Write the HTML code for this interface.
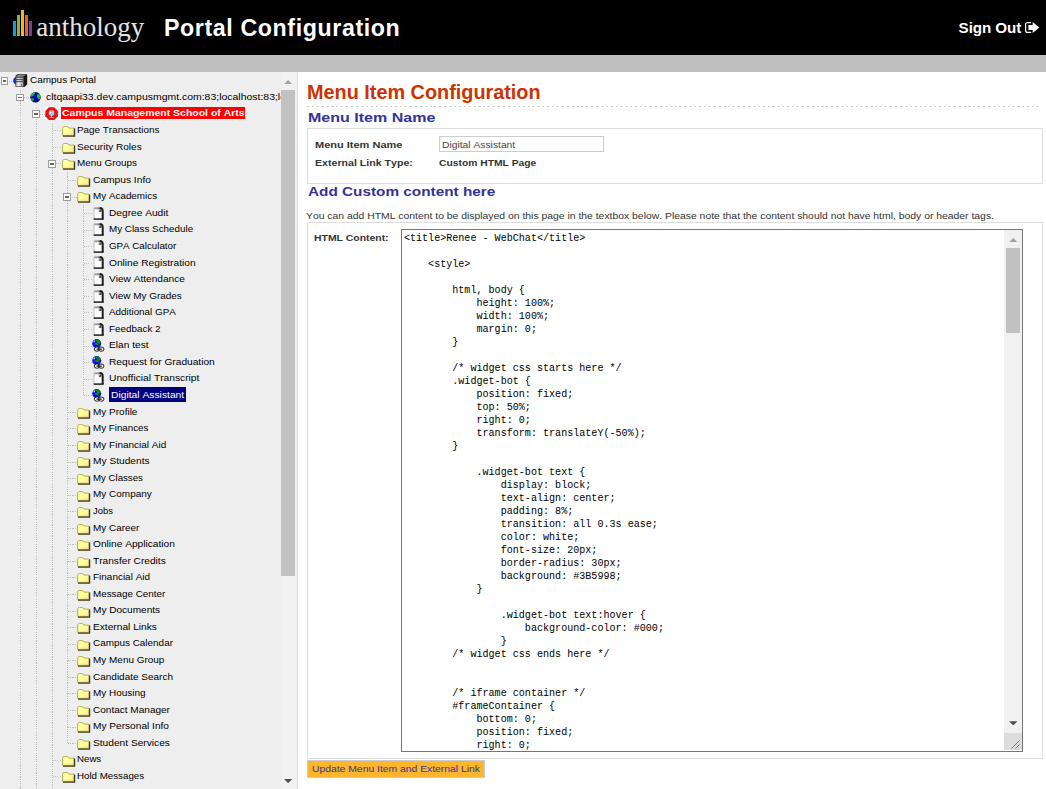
<!DOCTYPE html>
<html><head><meta charset="utf-8"><title>Portal Configuration</title>
<style>
html,body{margin:0;padding:0;background:#fff;overflow:hidden}
body{width:1046px;height:789px;position:relative;font-family:"Liberation Sans",sans-serif;font-kerning:none}
.t{position:absolute;white-space:pre;display:block;transform-origin:0 0;line-height:16px;height:16px;font-family:"Liberation Sans",sans-serif}
#hdr{position:absolute;left:0;top:0;width:1046px;height:55px;background:#000}
#bar{position:absolute;left:0;top:55px;width:1046px;height:17px;background:#c0c0c0}
#logo i{position:absolute;width:2.9px;display:block}
#so{position:absolute;left:1024.7px;top:22.1px}
#left{position:absolute;left:0;top:72px;width:280.8px;height:717px;background:#eee}
#trk{position:absolute;left:280.8px;top:72px;width:16.3px;height:717px;background:#f1f1f1}
#thb{position:absolute;left:281.2px;top:90px;width:13.7px;height:485.9px;background:#c1c1c1}
#sep{position:absolute;left:297.1px;top:72px;width:1px;height:717px;background:#ddd}
.arr{position:absolute}
#tree{position:absolute;left:0;top:0;width:280.8px;height:789px;overflow:hidden}
#tree i{position:absolute;display:block}
.vd{width:1px;background:repeating-linear-gradient(to bottom,#bcbcbc 0,#bcbcbc 1.1px,transparent 1.1px,transparent 2.2px)}
.hd{height:1px;background:repeating-linear-gradient(to right,#bcbcbc 0,#bcbcbc 1.1px,transparent 1.1px,transparent 2.2px)}
.ex{width:5.8px;height:5.5px;border:1px solid #9c9c9c;background:#fff;box-sizing:content-box}
.ex b{position:absolute;left:1px;top:2px;width:3.9px;height:1.4px;background:#666;display:block}
.ic{position:absolute;overflow:visible}
#dash{position:absolute;left:306.9px;top:106px;width:735px;height:1px;background:repeating-linear-gradient(to right,#cacaca 0,#cacaca 2px,transparent 2px,transparent 4.9px)}
.fs{position:absolute;border:1px solid #ddd}
#inp{position:absolute;left:439.2px;top:136.2px;width:162.6px;height:13.4px;border:1px solid #ccc;background:#fff}
#ta{position:absolute;left:401px;top:229px;width:619.7px;height:521.3px;border:1px solid #767676;background:#fff}
#code{position:absolute;margin:0;left:403.9px;top:231.6px;font-family:"Liberation Mono",monospace;font-size:10.08px;line-height:13px;color:#000;white-space:pre}
#tatrk{position:absolute;left:1004.2px;top:230px;width:17.5px;height:503px;background:#f1f1f1}
#tathb{position:absolute;left:1006.1px;top:248px;width:13.9px;height:84.8px;background:#c1c1c1}
#tacor{position:absolute;left:1004.2px;top:733px;width:17.5px;height:17.3px;background:#dcdcdc;overflow:hidden}
#tacor svg{position:absolute;left:-1px;top:-1px}
#btn{position:absolute;left:307.2px;top:760.4px;width:175.6px;height:15.2px;border:1px solid #ccc;background:#fdb52d}

</style></head>
<body>
<svg width="0" height="0" style="position:absolute"><defs><linearGradient id="fg" x1="0" y1="0" x2="1" y2="1"><stop offset="0" stop-color="#ffffa2"/><stop offset="0.5" stop-color="#ffff9a"/><stop offset="1" stop-color="#ffdca4"/></linearGradient><linearGradient id="pt" gradientUnits="userSpaceOnUse" x1="0" y1="0" x2="8" y2="0"><stop offset="0" stop-color="#b4b4b4"/><stop offset="0.7" stop-color="#8a8a8a"/><stop offset="1" stop-color="#333"/></linearGradient><radialGradient id="gg" cx="0.4" cy="0.35" r="0.7"><stop offset="0" stop-color="#0a0ae0"/><stop offset="1" stop-color="#000078"/></radialGradient><linearGradient id="sg" x1="0" y1="0" x2="1" y2="0"><stop offset="0" stop-color="#8c8c8c"/><stop offset="0.35" stop-color="#f2f2f2"/><stop offset="1" stop-color="#9a9a9a"/></linearGradient></defs></svg>
<div id="hdr"></div>
<div id="bar"></div>
<div id="logo"><i style="left:13.3px;width:2.5px;top:20.6px;height:15.4px;background:#1e9ad6"></i><i style="left:16.8px;top:15px;height:21px;background:#7db642"></i><i style="left:20.7px;width:3.1px;top:10px;height:26px;background:#f7b519"></i><i style="left:24.9px;width:3.1px;top:15px;height:21px;background:#ea5a2c"></i><i style="left:29.1px;width:2.8px;top:20.6px;height:15.4px;background:#7c3f98"></i></div>
<svg id="so" width="14.3" height="11" viewBox="0 0 14.3 11"><path d="M6.2 0.6H2.6Q0.6 0.6 0.6 2.6V8.4Q0.6 10.4 2.6 10.4H6.2" fill="none" stroke="#fff" stroke-width="1.2"/><path d="M3.4 3.1H7.7V0L14.3 5.5L7.7 11V8H3.4Z" fill="#fff"/></svg>
<div id="left"></div>
<div id="trk"></div><div id="thb"></div>
<svg class="arr" style="left:283.9px;top:79.8px" width="8.2" height="4.2" viewBox="0 0 8 4"><path d="M0 4L4 0L8 4Z" fill="#a3a3a3"/></svg>
<svg class="arr" style="left:283.9px;top:778.6px" width="8.2" height="4.2" viewBox="0 0 8 4"><path d="M0 0L4 4L8 0Z" fill="#505050"/></svg>
<div id="sep"></div>
<div id="tree">
<i class="vd" style="left:19.70px;top:90.30px;height:709.70px"></i>
<i class="vd" style="left:35.70px;top:107.50px;height:692.50px"></i>
<i class="vd" style="left:51.75px;top:123.50px;height:676.50px"></i>
<i class="vd" style="left:67.00px;top:171.68px;height:571.92px"></i>
<i class="vd" style="left:82.80px;top:204.80px;height:190.99px"></i>
<i class="hd" style="left:8.60px;top:80.60px;width:4.50px"></i>
<i class="ex" style="left:0.50px;top:77.30px"><b></b></i>
<svg class="ic" style="left:12.70px;top:73.70px" width="14.5" height="13.4" viewBox="0 0 14.5 13.4"><path d="M2.6 1.6L4.6 0.3H13.6Q14.2 0.3 14.2 1V10.6L11.4 13H3.2Q2.6 13 2.6 12.4Z" fill="#1a1a1a"/><path d="M2.4 2.4H10.4V12.6H3Q2.4 12.6 2.4 12Z" fill="url(#sg)"/><path d="M3 2.2L5 0.9H12.8L10.6 2.2Z" fill="#8a8a8a"/><path d="M3 3.6H10.2M3 5.6H10.2M3 7.6H10.2" stroke="#3c3c3c" stroke-width="0.9"/><path d="M2.8 3.2Q0.4 4 0.4 6.6Q0.4 9.4 2.8 10.2Z" fill="#0a28f0" stroke="#223" stroke-width="0.5"/><rect x="7.8" y="10.2" width="1.2" height="1.3" fill="#e83838"/></svg>
<i class="hd" style="left:24.40px;top:97.16px;width:5.20px"></i>
<i class="ex" style="left:16.10px;top:93.86px"><b></b></i>
<svg class="ic" style="left:29.50px;top:92.36px" width="11.0" height="10.6" viewBox="0 0 11 10.6"><circle cx="5.5" cy="5.3" r="5.2" fill="url(#gg)"/><path d="M1.6 1.8Q3.4 0.1 5.2 0.6Q5.4 2 4 2.8Q3.4 4.4 1.4 4.6Q0.2 4.4 0.6 3.4Q0.9 2.4 1.6 1.8Z" fill="#1cc01c"/><path d="M7.4 2.6Q9 1.6 9.8 2.6Q10.8 4.4 10.4 6Q9.6 8 8.4 7.6Q8.6 6 7.2 5.4Q6.4 3.8 7.4 2.6Z" fill="#1cc01c"/><path d="M1 6.2Q2.6 5.6 3.8 6.6Q4.2 8 3.4 9.2Q2.2 9 1.2 7.8Q0.7 7 1 6.2Z" fill="#14a814"/></svg>
<i class="hd" style="left:40.40px;top:113.72px;width:4.90px"></i>
<i class="ex" style="left:32.10px;top:110.42px"><b></b></i>
<svg class="ic" style="left:45.10px;top:106.62px" width="13.2" height="13.2" viewBox="0 0 13.2 13.2"><rect x="0" y="0" width="13.2" height="13.2" fill="#fff"/><path d="M3.9 0.3H9.3L12.9 3.9V9.3L9.3 12.9H3.9L0.3 9.3V3.9Z" fill="#e41212"/><circle cx="6.6" cy="6" r="2.9" fill="#9cc6f2"/><path d="M5.2 4.6Q5.4 2.6 7.4 2.2Q7 3.4 7.8 4.2Q6.2 4.2 5.2 4.6Z" fill="#f26a30"/><path d="M4.6 5.4Q6 4.6 7 5.8Q6 6.8 4.8 6.6Z" fill="#e8f2ff"/><path d="M6.6 8.8V10.4M4.6 10.6H8.6" stroke="#f0cccc" stroke-width="0.8"/></svg>
<i class="hl" style="left:61px;top:106.90px;width:184.1px;height:11.7px;background:#f00"></i>
<i class="hd" style="left:53.05px;top:130.29px;width:7.95px"></i>
<svg class="ic" style="left:61.70px;top:126.19px" width="13.2" height="10.7" viewBox="0 0 13.2 10.7"><path d="M0.6 2.4Q0.6 0.6 2.2 0.6H5.2Q6.4 0.6 6.9 2.1H12V9.4H0.6Z" fill="url(#fg)" stroke="#a8a84e" stroke-width="0.9"/><path d="M12.6 2.6V10.1H1" fill="none" stroke="#3f3f18" stroke-width="1.25"/><path d="M1.7 1.5H5" stroke="#ffffec" stroke-width="0.9"/></svg>
<i class="hd" style="left:53.05px;top:146.85px;width:7.95px"></i>
<svg class="ic" style="left:61.70px;top:142.75px" width="13.2" height="10.7" viewBox="0 0 13.2 10.7"><path d="M0.6 2.4Q0.6 0.6 2.2 0.6H5.2Q6.4 0.6 6.9 2.1H12V9.4H0.6Z" fill="url(#fg)" stroke="#a8a84e" stroke-width="0.9"/><path d="M12.6 2.6V10.1H1" fill="none" stroke="#3f3f18" stroke-width="1.25"/><path d="M1.7 1.5H5" stroke="#ffffec" stroke-width="0.9"/></svg>
<i class="hd" style="left:56.45px;top:163.41px;width:4.55px"></i>
<i class="ex" style="left:48.15px;top:160.11px"><b></b></i>
<svg class="ic" style="left:61.70px;top:159.31px" width="13.2" height="10.7" viewBox="0 0 13.2 10.7"><path d="M0.6 2.4Q0.6 0.6 2.2 0.6H5.2Q6.4 0.6 6.9 2.1H12V9.4H0.6Z" fill="url(#fg)" stroke="#a8a84e" stroke-width="0.9"/><path d="M12.6 2.6V10.1H1" fill="none" stroke="#3f3f18" stroke-width="1.25"/><path d="M1.7 1.5H5" stroke="#ffffec" stroke-width="0.9"/></svg>
<i class="hd" style="left:68.30px;top:179.98px;width:8.40px"></i>
<svg class="ic" style="left:76.60px;top:175.88px" width="13.2" height="10.7" viewBox="0 0 13.2 10.7"><path d="M0.6 2.4Q0.6 0.6 2.2 0.6H5.2Q6.4 0.6 6.9 2.1H12V9.4H0.6Z" fill="url(#fg)" stroke="#a8a84e" stroke-width="0.9"/><path d="M12.6 2.6V10.1H1" fill="none" stroke="#3f3f18" stroke-width="1.25"/><path d="M1.7 1.5H5" stroke="#ffffec" stroke-width="0.9"/></svg>
<i class="hd" style="left:71.70px;top:196.54px;width:5.00px"></i>
<i class="ex" style="left:63.40px;top:193.24px"><b></b></i>
<svg class="ic" style="left:76.60px;top:192.44px" width="13.2" height="10.7" viewBox="0 0 13.2 10.7"><path d="M0.6 2.4Q0.6 0.6 2.2 0.6H5.2Q6.4 0.6 6.9 2.1H12V9.4H0.6Z" fill="url(#fg)" stroke="#a8a84e" stroke-width="0.9"/><path d="M12.6 2.6V10.1H1" fill="none" stroke="#3f3f18" stroke-width="1.25"/><path d="M1.7 1.5H5" stroke="#ffffec" stroke-width="0.9"/></svg>
<i class="hd" style="left:84.10px;top:213.10px;width:8.30px"></i>
<svg class="ic" style="left:93.10px;top:206.80px" width="10.7" height="12.8" viewBox="0 0 10.7 12.8"><path d="M0.8 0.9H7.4Q9.6 0.9 9.6 3V12H0.8Z" fill="#fff"/><path d="M1 1.6V12" stroke="#c6c6c6" stroke-width="1.2" fill="none"/><path d="M0.8 1.3H7.2" stroke="url(#pt)" stroke-width="1.9" fill="none"/><path d="M6.8 1Q9.7 1 9.7 3.8V12.2" stroke="#1c1c1c" stroke-width="2" fill="none"/><path d="M0.7 12.1H10.6" stroke="#1c1c1c" stroke-width="1.5" fill="none"/><path d="M5.9 2.4H8.5V4.9H5.9Z" fill="#4a4a4a"/><path d="M5.9 2.4H7.4L5.9 3.9Z" fill="#d8d8d8"/></svg>
<i class="hd" style="left:84.10px;top:229.66px;width:8.30px"></i>
<svg class="ic" style="left:93.10px;top:223.36px" width="10.7" height="12.8" viewBox="0 0 10.7 12.8"><path d="M0.8 0.9H7.4Q9.6 0.9 9.6 3V12H0.8Z" fill="#fff"/><path d="M1 1.6V12" stroke="#c6c6c6" stroke-width="1.2" fill="none"/><path d="M0.8 1.3H7.2" stroke="url(#pt)" stroke-width="1.9" fill="none"/><path d="M6.8 1Q9.7 1 9.7 3.8V12.2" stroke="#1c1c1c" stroke-width="2" fill="none"/><path d="M0.7 12.1H10.6" stroke="#1c1c1c" stroke-width="1.5" fill="none"/><path d="M5.9 2.4H8.5V4.9H5.9Z" fill="#4a4a4a"/><path d="M5.9 2.4H7.4L5.9 3.9Z" fill="#d8d8d8"/></svg>
<i class="hd" style="left:84.10px;top:246.23px;width:8.30px"></i>
<svg class="ic" style="left:93.10px;top:239.93px" width="10.7" height="12.8" viewBox="0 0 10.7 12.8"><path d="M0.8 0.9H7.4Q9.6 0.9 9.6 3V12H0.8Z" fill="#fff"/><path d="M1 1.6V12" stroke="#c6c6c6" stroke-width="1.2" fill="none"/><path d="M0.8 1.3H7.2" stroke="url(#pt)" stroke-width="1.9" fill="none"/><path d="M6.8 1Q9.7 1 9.7 3.8V12.2" stroke="#1c1c1c" stroke-width="2" fill="none"/><path d="M0.7 12.1H10.6" stroke="#1c1c1c" stroke-width="1.5" fill="none"/><path d="M5.9 2.4H8.5V4.9H5.9Z" fill="#4a4a4a"/><path d="M5.9 2.4H7.4L5.9 3.9Z" fill="#d8d8d8"/></svg>
<i class="hd" style="left:84.10px;top:262.79px;width:8.30px"></i>
<svg class="ic" style="left:93.10px;top:256.49px" width="10.7" height="12.8" viewBox="0 0 10.7 12.8"><path d="M0.8 0.9H7.4Q9.6 0.9 9.6 3V12H0.8Z" fill="#fff"/><path d="M1 1.6V12" stroke="#c6c6c6" stroke-width="1.2" fill="none"/><path d="M0.8 1.3H7.2" stroke="url(#pt)" stroke-width="1.9" fill="none"/><path d="M6.8 1Q9.7 1 9.7 3.8V12.2" stroke="#1c1c1c" stroke-width="2" fill="none"/><path d="M0.7 12.1H10.6" stroke="#1c1c1c" stroke-width="1.5" fill="none"/><path d="M5.9 2.4H8.5V4.9H5.9Z" fill="#4a4a4a"/><path d="M5.9 2.4H7.4L5.9 3.9Z" fill="#d8d8d8"/></svg>
<i class="hd" style="left:84.10px;top:279.35px;width:8.30px"></i>
<svg class="ic" style="left:93.10px;top:273.05px" width="10.7" height="12.8" viewBox="0 0 10.7 12.8"><path d="M0.8 0.9H7.4Q9.6 0.9 9.6 3V12H0.8Z" fill="#fff"/><path d="M1 1.6V12" stroke="#c6c6c6" stroke-width="1.2" fill="none"/><path d="M0.8 1.3H7.2" stroke="url(#pt)" stroke-width="1.9" fill="none"/><path d="M6.8 1Q9.7 1 9.7 3.8V12.2" stroke="#1c1c1c" stroke-width="2" fill="none"/><path d="M0.7 12.1H10.6" stroke="#1c1c1c" stroke-width="1.5" fill="none"/><path d="M5.9 2.4H8.5V4.9H5.9Z" fill="#4a4a4a"/><path d="M5.9 2.4H7.4L5.9 3.9Z" fill="#d8d8d8"/></svg>
<i class="hd" style="left:84.10px;top:295.91px;width:8.30px"></i>
<svg class="ic" style="left:93.10px;top:289.61px" width="10.7" height="12.8" viewBox="0 0 10.7 12.8"><path d="M0.8 0.9H7.4Q9.6 0.9 9.6 3V12H0.8Z" fill="#fff"/><path d="M1 1.6V12" stroke="#c6c6c6" stroke-width="1.2" fill="none"/><path d="M0.8 1.3H7.2" stroke="url(#pt)" stroke-width="1.9" fill="none"/><path d="M6.8 1Q9.7 1 9.7 3.8V12.2" stroke="#1c1c1c" stroke-width="2" fill="none"/><path d="M0.7 12.1H10.6" stroke="#1c1c1c" stroke-width="1.5" fill="none"/><path d="M5.9 2.4H8.5V4.9H5.9Z" fill="#4a4a4a"/><path d="M5.9 2.4H7.4L5.9 3.9Z" fill="#d8d8d8"/></svg>
<i class="hd" style="left:84.10px;top:312.48px;width:8.30px"></i>
<svg class="ic" style="left:93.10px;top:306.18px" width="10.7" height="12.8" viewBox="0 0 10.7 12.8"><path d="M0.8 0.9H7.4Q9.6 0.9 9.6 3V12H0.8Z" fill="#fff"/><path d="M1 1.6V12" stroke="#c6c6c6" stroke-width="1.2" fill="none"/><path d="M0.8 1.3H7.2" stroke="url(#pt)" stroke-width="1.9" fill="none"/><path d="M6.8 1Q9.7 1 9.7 3.8V12.2" stroke="#1c1c1c" stroke-width="2" fill="none"/><path d="M0.7 12.1H10.6" stroke="#1c1c1c" stroke-width="1.5" fill="none"/><path d="M5.9 2.4H8.5V4.9H5.9Z" fill="#4a4a4a"/><path d="M5.9 2.4H7.4L5.9 3.9Z" fill="#d8d8d8"/></svg>
<i class="hd" style="left:84.10px;top:329.04px;width:8.30px"></i>
<svg class="ic" style="left:93.10px;top:322.74px" width="10.7" height="12.8" viewBox="0 0 10.7 12.8"><path d="M0.8 0.9H7.4Q9.6 0.9 9.6 3V12H0.8Z" fill="#fff"/><path d="M1 1.6V12" stroke="#c6c6c6" stroke-width="1.2" fill="none"/><path d="M0.8 1.3H7.2" stroke="url(#pt)" stroke-width="1.9" fill="none"/><path d="M6.8 1Q9.7 1 9.7 3.8V12.2" stroke="#1c1c1c" stroke-width="2" fill="none"/><path d="M0.7 12.1H10.6" stroke="#1c1c1c" stroke-width="1.5" fill="none"/><path d="M5.9 2.4H8.5V4.9H5.9Z" fill="#4a4a4a"/><path d="M5.9 2.4H7.4L5.9 3.9Z" fill="#d8d8d8"/></svg>
<i class="hd" style="left:84.10px;top:345.60px;width:8.30px"></i>
<svg class="ic" style="left:91.90px;top:339.00px" width="12.7" height="13.1" viewBox="0 0 13 13.4"><circle cx="4.8" cy="4.7" r="4.6" fill="#1010f0"/><path d="M4.2 0.3Q7 -0.2 8.6 2.2Q9.4 3.6 8.4 4.4Q7.2 4.2 7.4 5.6Q6.4 7 4.8 6.2Q3.2 6.4 2.8 4.8Q3.6 3.6 5 3.8Q5.4 2.4 4 2Q3.4 1 4.2 0.3Z" fill="#0a8414"/><path d="M1.4 2.8Q2 1.6 3.2 1.4Q3.4 2.6 2.6 3.4Q1.8 3.8 1.4 2.8Z" fill="#dcdcff"/><path d="M7.6 6.2Q8.8 6 9.2 5" stroke="#0000a0" stroke-width="0.8" fill="none"/><rect x="2.4" y="8.3" width="5.3" height="4.1" rx="2" fill="#fff" stroke="#111" stroke-width="1"/><rect x="6.9" y="8.3" width="5.3" height="4.1" rx="2" fill="#fff" stroke="#111" stroke-width="1"/><path d="M4.6 10.35H10" stroke="#111" stroke-width="1.3"/></svg>
<i class="hd" style="left:84.10px;top:362.16px;width:8.30px"></i>
<svg class="ic" style="left:91.90px;top:355.56px" width="12.7" height="13.1" viewBox="0 0 13 13.4"><circle cx="4.8" cy="4.7" r="4.6" fill="#1010f0"/><path d="M4.2 0.3Q7 -0.2 8.6 2.2Q9.4 3.6 8.4 4.4Q7.2 4.2 7.4 5.6Q6.4 7 4.8 6.2Q3.2 6.4 2.8 4.8Q3.6 3.6 5 3.8Q5.4 2.4 4 2Q3.4 1 4.2 0.3Z" fill="#0a8414"/><path d="M1.4 2.8Q2 1.6 3.2 1.4Q3.4 2.6 2.6 3.4Q1.8 3.8 1.4 2.8Z" fill="#dcdcff"/><path d="M7.6 6.2Q8.8 6 9.2 5" stroke="#0000a0" stroke-width="0.8" fill="none"/><rect x="2.4" y="8.3" width="5.3" height="4.1" rx="2" fill="#fff" stroke="#111" stroke-width="1"/><rect x="6.9" y="8.3" width="5.3" height="4.1" rx="2" fill="#fff" stroke="#111" stroke-width="1"/><path d="M4.6 10.35H10" stroke="#111" stroke-width="1.3"/></svg>
<i class="hd" style="left:84.10px;top:378.73px;width:8.30px"></i>
<svg class="ic" style="left:93.10px;top:372.43px" width="10.7" height="12.8" viewBox="0 0 10.7 12.8"><path d="M0.8 0.9H7.4Q9.6 0.9 9.6 3V12H0.8Z" fill="#fff"/><path d="M1 1.6V12" stroke="#c6c6c6" stroke-width="1.2" fill="none"/><path d="M0.8 1.3H7.2" stroke="url(#pt)" stroke-width="1.9" fill="none"/><path d="M6.8 1Q9.7 1 9.7 3.8V12.2" stroke="#1c1c1c" stroke-width="2" fill="none"/><path d="M0.7 12.1H10.6" stroke="#1c1c1c" stroke-width="1.5" fill="none"/><path d="M5.9 2.4H8.5V4.9H5.9Z" fill="#4a4a4a"/><path d="M5.9 2.4H7.4L5.9 3.9Z" fill="#d8d8d8"/></svg>
<i class="hd" style="left:84.10px;top:395.29px;width:8.30px"></i>
<svg class="ic" style="left:91.90px;top:388.69px" width="12.7" height="13.1" viewBox="0 0 13 13.4"><circle cx="4.8" cy="4.7" r="4.6" fill="#1010f0"/><path d="M4.2 0.3Q7 -0.2 8.6 2.2Q9.4 3.6 8.4 4.4Q7.2 4.2 7.4 5.6Q6.4 7 4.8 6.2Q3.2 6.4 2.8 4.8Q3.6 3.6 5 3.8Q5.4 2.4 4 2Q3.4 1 4.2 0.3Z" fill="#0a8414"/><path d="M1.4 2.8Q2 1.6 3.2 1.4Q3.4 2.6 2.6 3.4Q1.8 3.8 1.4 2.8Z" fill="#dcdcff"/><path d="M7.6 6.2Q8.8 6 9.2 5" stroke="#0000a0" stroke-width="0.8" fill="none"/><rect x="2.4" y="8.3" width="5.3" height="4.1" rx="2" fill="#fff" stroke="#111" stroke-width="1"/><rect x="6.9" y="8.3" width="5.3" height="4.1" rx="2" fill="#fff" stroke="#111" stroke-width="1"/><path d="M4.6 10.35H10" stroke="#111" stroke-width="1.3"/></svg>
<i class="hl" style="left:108.9px;top:387px;width:77.2px;height:14.9px;background:#000080"></i>
<i class="hd" style="left:68.30px;top:411.85px;width:8.40px"></i>
<svg class="ic" style="left:76.60px;top:407.75px" width="13.2" height="10.7" viewBox="0 0 13.2 10.7"><path d="M0.6 2.4Q0.6 0.6 2.2 0.6H5.2Q6.4 0.6 6.9 2.1H12V9.4H0.6Z" fill="url(#fg)" stroke="#a8a84e" stroke-width="0.9"/><path d="M12.6 2.6V10.1H1" fill="none" stroke="#3f3f18" stroke-width="1.25"/><path d="M1.7 1.5H5" stroke="#ffffec" stroke-width="0.9"/></svg>
<i class="hd" style="left:68.30px;top:428.41px;width:8.40px"></i>
<svg class="ic" style="left:76.60px;top:424.31px" width="13.2" height="10.7" viewBox="0 0 13.2 10.7"><path d="M0.6 2.4Q0.6 0.6 2.2 0.6H5.2Q6.4 0.6 6.9 2.1H12V9.4H0.6Z" fill="url(#fg)" stroke="#a8a84e" stroke-width="0.9"/><path d="M12.6 2.6V10.1H1" fill="none" stroke="#3f3f18" stroke-width="1.25"/><path d="M1.7 1.5H5" stroke="#ffffec" stroke-width="0.9"/></svg>
<i class="hd" style="left:68.30px;top:444.98px;width:8.40px"></i>
<svg class="ic" style="left:76.60px;top:440.88px" width="13.2" height="10.7" viewBox="0 0 13.2 10.7"><path d="M0.6 2.4Q0.6 0.6 2.2 0.6H5.2Q6.4 0.6 6.9 2.1H12V9.4H0.6Z" fill="url(#fg)" stroke="#a8a84e" stroke-width="0.9"/><path d="M12.6 2.6V10.1H1" fill="none" stroke="#3f3f18" stroke-width="1.25"/><path d="M1.7 1.5H5" stroke="#ffffec" stroke-width="0.9"/></svg>
<i class="hd" style="left:68.30px;top:461.54px;width:8.40px"></i>
<svg class="ic" style="left:76.60px;top:457.44px" width="13.2" height="10.7" viewBox="0 0 13.2 10.7"><path d="M0.6 2.4Q0.6 0.6 2.2 0.6H5.2Q6.4 0.6 6.9 2.1H12V9.4H0.6Z" fill="url(#fg)" stroke="#a8a84e" stroke-width="0.9"/><path d="M12.6 2.6V10.1H1" fill="none" stroke="#3f3f18" stroke-width="1.25"/><path d="M1.7 1.5H5" stroke="#ffffec" stroke-width="0.9"/></svg>
<i class="hd" style="left:68.30px;top:478.10px;width:8.40px"></i>
<svg class="ic" style="left:76.60px;top:474.00px" width="13.2" height="10.7" viewBox="0 0 13.2 10.7"><path d="M0.6 2.4Q0.6 0.6 2.2 0.6H5.2Q6.4 0.6 6.9 2.1H12V9.4H0.6Z" fill="url(#fg)" stroke="#a8a84e" stroke-width="0.9"/><path d="M12.6 2.6V10.1H1" fill="none" stroke="#3f3f18" stroke-width="1.25"/><path d="M1.7 1.5H5" stroke="#ffffec" stroke-width="0.9"/></svg>
<i class="hd" style="left:68.30px;top:494.66px;width:8.40px"></i>
<svg class="ic" style="left:76.60px;top:490.56px" width="13.2" height="10.7" viewBox="0 0 13.2 10.7"><path d="M0.6 2.4Q0.6 0.6 2.2 0.6H5.2Q6.4 0.6 6.9 2.1H12V9.4H0.6Z" fill="url(#fg)" stroke="#a8a84e" stroke-width="0.9"/><path d="M12.6 2.6V10.1H1" fill="none" stroke="#3f3f18" stroke-width="1.25"/><path d="M1.7 1.5H5" stroke="#ffffec" stroke-width="0.9"/></svg>
<i class="hd" style="left:68.30px;top:511.23px;width:8.40px"></i>
<svg class="ic" style="left:76.60px;top:507.12px" width="13.2" height="10.7" viewBox="0 0 13.2 10.7"><path d="M0.6 2.4Q0.6 0.6 2.2 0.6H5.2Q6.4 0.6 6.9 2.1H12V9.4H0.6Z" fill="url(#fg)" stroke="#a8a84e" stroke-width="0.9"/><path d="M12.6 2.6V10.1H1" fill="none" stroke="#3f3f18" stroke-width="1.25"/><path d="M1.7 1.5H5" stroke="#ffffec" stroke-width="0.9"/></svg>
<i class="hd" style="left:68.30px;top:527.79px;width:8.40px"></i>
<svg class="ic" style="left:76.60px;top:523.69px" width="13.2" height="10.7" viewBox="0 0 13.2 10.7"><path d="M0.6 2.4Q0.6 0.6 2.2 0.6H5.2Q6.4 0.6 6.9 2.1H12V9.4H0.6Z" fill="url(#fg)" stroke="#a8a84e" stroke-width="0.9"/><path d="M12.6 2.6V10.1H1" fill="none" stroke="#3f3f18" stroke-width="1.25"/><path d="M1.7 1.5H5" stroke="#ffffec" stroke-width="0.9"/></svg>
<i class="hd" style="left:68.30px;top:544.35px;width:8.40px"></i>
<svg class="ic" style="left:76.60px;top:540.25px" width="13.2" height="10.7" viewBox="0 0 13.2 10.7"><path d="M0.6 2.4Q0.6 0.6 2.2 0.6H5.2Q6.4 0.6 6.9 2.1H12V9.4H0.6Z" fill="url(#fg)" stroke="#a8a84e" stroke-width="0.9"/><path d="M12.6 2.6V10.1H1" fill="none" stroke="#3f3f18" stroke-width="1.25"/><path d="M1.7 1.5H5" stroke="#ffffec" stroke-width="0.9"/></svg>
<i class="hd" style="left:68.30px;top:560.91px;width:8.40px"></i>
<svg class="ic" style="left:76.60px;top:556.81px" width="13.2" height="10.7" viewBox="0 0 13.2 10.7"><path d="M0.6 2.4Q0.6 0.6 2.2 0.6H5.2Q6.4 0.6 6.9 2.1H12V9.4H0.6Z" fill="url(#fg)" stroke="#a8a84e" stroke-width="0.9"/><path d="M12.6 2.6V10.1H1" fill="none" stroke="#3f3f18" stroke-width="1.25"/><path d="M1.7 1.5H5" stroke="#ffffec" stroke-width="0.9"/></svg>
<i class="hd" style="left:68.30px;top:577.47px;width:8.40px"></i>
<svg class="ic" style="left:76.60px;top:573.38px" width="13.2" height="10.7" viewBox="0 0 13.2 10.7"><path d="M0.6 2.4Q0.6 0.6 2.2 0.6H5.2Q6.4 0.6 6.9 2.1H12V9.4H0.6Z" fill="url(#fg)" stroke="#a8a84e" stroke-width="0.9"/><path d="M12.6 2.6V10.1H1" fill="none" stroke="#3f3f18" stroke-width="1.25"/><path d="M1.7 1.5H5" stroke="#ffffec" stroke-width="0.9"/></svg>
<i class="hd" style="left:68.30px;top:594.04px;width:8.40px"></i>
<svg class="ic" style="left:76.60px;top:589.94px" width="13.2" height="10.7" viewBox="0 0 13.2 10.7"><path d="M0.6 2.4Q0.6 0.6 2.2 0.6H5.2Q6.4 0.6 6.9 2.1H12V9.4H0.6Z" fill="url(#fg)" stroke="#a8a84e" stroke-width="0.9"/><path d="M12.6 2.6V10.1H1" fill="none" stroke="#3f3f18" stroke-width="1.25"/><path d="M1.7 1.5H5" stroke="#ffffec" stroke-width="0.9"/></svg>
<i class="hd" style="left:68.30px;top:610.60px;width:8.40px"></i>
<svg class="ic" style="left:76.60px;top:606.50px" width="13.2" height="10.7" viewBox="0 0 13.2 10.7"><path d="M0.6 2.4Q0.6 0.6 2.2 0.6H5.2Q6.4 0.6 6.9 2.1H12V9.4H0.6Z" fill="url(#fg)" stroke="#a8a84e" stroke-width="0.9"/><path d="M12.6 2.6V10.1H1" fill="none" stroke="#3f3f18" stroke-width="1.25"/><path d="M1.7 1.5H5" stroke="#ffffec" stroke-width="0.9"/></svg>
<i class="hd" style="left:68.30px;top:627.16px;width:8.40px"></i>
<svg class="ic" style="left:76.60px;top:623.06px" width="13.2" height="10.7" viewBox="0 0 13.2 10.7"><path d="M0.6 2.4Q0.6 0.6 2.2 0.6H5.2Q6.4 0.6 6.9 2.1H12V9.4H0.6Z" fill="url(#fg)" stroke="#a8a84e" stroke-width="0.9"/><path d="M12.6 2.6V10.1H1" fill="none" stroke="#3f3f18" stroke-width="1.25"/><path d="M1.7 1.5H5" stroke="#ffffec" stroke-width="0.9"/></svg>
<i class="hd" style="left:68.30px;top:643.72px;width:8.40px"></i>
<svg class="ic" style="left:76.60px;top:639.62px" width="13.2" height="10.7" viewBox="0 0 13.2 10.7"><path d="M0.6 2.4Q0.6 0.6 2.2 0.6H5.2Q6.4 0.6 6.9 2.1H12V9.4H0.6Z" fill="url(#fg)" stroke="#a8a84e" stroke-width="0.9"/><path d="M12.6 2.6V10.1H1" fill="none" stroke="#3f3f18" stroke-width="1.25"/><path d="M1.7 1.5H5" stroke="#ffffec" stroke-width="0.9"/></svg>
<i class="hd" style="left:68.30px;top:660.29px;width:8.40px"></i>
<svg class="ic" style="left:76.60px;top:656.19px" width="13.2" height="10.7" viewBox="0 0 13.2 10.7"><path d="M0.6 2.4Q0.6 0.6 2.2 0.6H5.2Q6.4 0.6 6.9 2.1H12V9.4H0.6Z" fill="url(#fg)" stroke="#a8a84e" stroke-width="0.9"/><path d="M12.6 2.6V10.1H1" fill="none" stroke="#3f3f18" stroke-width="1.25"/><path d="M1.7 1.5H5" stroke="#ffffec" stroke-width="0.9"/></svg>
<i class="hd" style="left:68.30px;top:676.85px;width:8.40px"></i>
<svg class="ic" style="left:76.60px;top:672.75px" width="13.2" height="10.7" viewBox="0 0 13.2 10.7"><path d="M0.6 2.4Q0.6 0.6 2.2 0.6H5.2Q6.4 0.6 6.9 2.1H12V9.4H0.6Z" fill="url(#fg)" stroke="#a8a84e" stroke-width="0.9"/><path d="M12.6 2.6V10.1H1" fill="none" stroke="#3f3f18" stroke-width="1.25"/><path d="M1.7 1.5H5" stroke="#ffffec" stroke-width="0.9"/></svg>
<i class="hd" style="left:68.30px;top:693.41px;width:8.40px"></i>
<svg class="ic" style="left:76.60px;top:689.31px" width="13.2" height="10.7" viewBox="0 0 13.2 10.7"><path d="M0.6 2.4Q0.6 0.6 2.2 0.6H5.2Q6.4 0.6 6.9 2.1H12V9.4H0.6Z" fill="url(#fg)" stroke="#a8a84e" stroke-width="0.9"/><path d="M12.6 2.6V10.1H1" fill="none" stroke="#3f3f18" stroke-width="1.25"/><path d="M1.7 1.5H5" stroke="#ffffec" stroke-width="0.9"/></svg>
<i class="hd" style="left:68.30px;top:709.97px;width:8.40px"></i>
<svg class="ic" style="left:76.60px;top:705.88px" width="13.2" height="10.7" viewBox="0 0 13.2 10.7"><path d="M0.6 2.4Q0.6 0.6 2.2 0.6H5.2Q6.4 0.6 6.9 2.1H12V9.4H0.6Z" fill="url(#fg)" stroke="#a8a84e" stroke-width="0.9"/><path d="M12.6 2.6V10.1H1" fill="none" stroke="#3f3f18" stroke-width="1.25"/><path d="M1.7 1.5H5" stroke="#ffffec" stroke-width="0.9"/></svg>
<i class="hd" style="left:68.30px;top:726.54px;width:8.40px"></i>
<svg class="ic" style="left:76.60px;top:722.44px" width="13.2" height="10.7" viewBox="0 0 13.2 10.7"><path d="M0.6 2.4Q0.6 0.6 2.2 0.6H5.2Q6.4 0.6 6.9 2.1H12V9.4H0.6Z" fill="url(#fg)" stroke="#a8a84e" stroke-width="0.9"/><path d="M12.6 2.6V10.1H1" fill="none" stroke="#3f3f18" stroke-width="1.25"/><path d="M1.7 1.5H5" stroke="#ffffec" stroke-width="0.9"/></svg>
<i class="hd" style="left:68.30px;top:743.10px;width:8.40px"></i>
<svg class="ic" style="left:76.60px;top:739.00px" width="13.2" height="10.7" viewBox="0 0 13.2 10.7"><path d="M0.6 2.4Q0.6 0.6 2.2 0.6H5.2Q6.4 0.6 6.9 2.1H12V9.4H0.6Z" fill="url(#fg)" stroke="#a8a84e" stroke-width="0.9"/><path d="M12.6 2.6V10.1H1" fill="none" stroke="#3f3f18" stroke-width="1.25"/><path d="M1.7 1.5H5" stroke="#ffffec" stroke-width="0.9"/></svg>
<i class="hd" style="left:53.05px;top:759.66px;width:7.95px"></i>
<svg class="ic" style="left:61.70px;top:755.56px" width="13.2" height="10.7" viewBox="0 0 13.2 10.7"><path d="M0.6 2.4Q0.6 0.6 2.2 0.6H5.2Q6.4 0.6 6.9 2.1H12V9.4H0.6Z" fill="url(#fg)" stroke="#a8a84e" stroke-width="0.9"/><path d="M12.6 2.6V10.1H1" fill="none" stroke="#3f3f18" stroke-width="1.25"/><path d="M1.7 1.5H5" stroke="#ffffec" stroke-width="0.9"/></svg>
<i class="hd" style="left:53.05px;top:776.22px;width:7.95px"></i>
<svg class="ic" style="left:61.70px;top:772.12px" width="13.2" height="10.7" viewBox="0 0 13.2 10.7"><path d="M0.6 2.4Q0.6 0.6 2.2 0.6H5.2Q6.4 0.6 6.9 2.1H12V9.4H0.6Z" fill="url(#fg)" stroke="#a8a84e" stroke-width="0.9"/><path d="M12.6 2.6V10.1H1" fill="none" stroke="#3f3f18" stroke-width="1.25"/><path d="M1.7 1.5H5" stroke="#ffffec" stroke-width="0.9"/></svg>
<i class="hd" style="left:53.05px;top:792.79px;width:7.95px"></i>
<svg class="ic" style="left:61.70px;top:788.69px" width="13.2" height="10.7" viewBox="0 0 13.2 10.7"><path d="M0.6 2.4Q0.6 0.6 2.2 0.6H5.2Q6.4 0.6 6.9 2.1H12V9.4H0.6Z" fill="url(#fg)" stroke="#a8a84e" stroke-width="0.9"/><path d="M12.6 2.6V10.1H1" fill="none" stroke="#3f3f18" stroke-width="1.25"/><path d="M1.7 1.5H5" stroke="#ffffec" stroke-width="0.9"/></svg>
<span class="t" style="left:30.10px;top:72.35px;font-size:9.4px;color:#000;transform:scaleX(1.0640);">Campus Portal</span>
<span class="t" style="left:45.80px;top:88.91px;font-size:9.4px;color:#000;transform:scaleX(1.1151);">cltqaapi33.dev.campusmgmt.com:83;localhost:83;localhost</span>
<span class="t" style="left:62.10px;top:105.47px;font-size:9.4px;color:#fff;font-weight:bold;transform:scaleX(1.1166);">Campus Management School of Arts</span>
<span class="t" style="left:77.20px;top:122.04px;font-size:9.4px;color:#000;transform:scaleX(1.0540);">Page Transactions</span>
<span class="t" style="left:77.20px;top:138.60px;font-size:9.4px;color:#000;transform:scaleX(1.0704);">Security Roles</span>
<span class="t" style="left:77.20px;top:155.16px;font-size:9.4px;color:#000;transform:scaleX(1.0559);">Menu Groups</span>
<span class="t" style="left:92.90px;top:171.72px;font-size:9.4px;color:#000;transform:scaleX(1.0896);">Campus Info</span>
<span class="t" style="left:92.90px;top:188.29px;font-size:9.4px;color:#000;transform:scaleX(1.0520);">My Academics</span>
<span class="t" style="left:108.60px;top:204.85px;font-size:9.4px;color:#000;transform:scaleX(1.0837);">Degree Audit</span>
<span class="t" style="left:108.60px;top:221.41px;font-size:9.4px;color:#000;transform:scaleX(1.0480);">My Class Schedule</span>
<span class="t" style="left:108.60px;top:237.97px;font-size:9.4px;color:#000;transform:scaleX(1.0404);">GPA Calculator</span>
<span class="t" style="left:108.60px;top:254.54px;font-size:9.4px;color:#000;transform:scaleX(1.0859);">Online Registration</span>
<span class="t" style="left:108.60px;top:271.10px;font-size:9.4px;color:#000;transform:scaleX(1.0779);">View Attendance</span>
<span class="t" style="left:108.60px;top:287.66px;font-size:9.4px;color:#000;transform:scaleX(1.0574);">View My Grades</span>
<span class="t" style="left:108.60px;top:304.22px;font-size:9.4px;color:#000;transform:scaleX(1.0509);">Additional GPA</span>
<span class="t" style="left:108.60px;top:320.79px;font-size:9.4px;color:#000;transform:scaleX(1.0532);">Feedback 2</span>
<span class="t" style="left:108.60px;top:337.35px;font-size:9.4px;color:#000;transform:scaleX(1.0883);">Elan test</span>
<span class="t" style="left:108.60px;top:353.91px;font-size:9.4px;color:#000;transform:scaleX(1.0854);">Request for Graduation</span>
<span class="t" style="left:108.60px;top:370.47px;font-size:9.4px;color:#000;transform:scaleX(1.0910);">Unofficial Transcript</span>
<span class="t" style="left:111.00px;top:387.04px;font-size:9.4px;color:#fff;transform:scaleX(1.0974);">Digital Assistant</span>
<span class="t" style="left:92.90px;top:403.60px;font-size:9.4px;color:#000;transform:scaleX(1.0657);">My Profile</span>
<span class="t" style="left:92.90px;top:420.16px;font-size:9.4px;color:#000;transform:scaleX(1.0432);">My Finances</span>
<span class="t" style="left:92.90px;top:436.72px;font-size:9.4px;color:#000;transform:scaleX(1.0642);">My Financial Aid</span>
<span class="t" style="left:92.90px;top:453.29px;font-size:9.4px;color:#000;transform:scaleX(1.0857);">My Students</span>
<span class="t" style="left:92.90px;top:469.85px;font-size:9.4px;color:#000;transform:scaleX(1.0286);">My Classes</span>
<span class="t" style="left:92.90px;top:486.41px;font-size:9.4px;color:#000;transform:scaleX(1.0649);">My Company</span>
<span class="t" style="left:92.90px;top:502.97px;font-size:9.4px;color:#000;transform:scaleX(1.0054);">Jobs</span>
<span class="t" style="left:92.90px;top:519.54px;font-size:9.4px;color:#000;transform:scaleX(1.0589);">My Career</span>
<span class="t" style="left:92.90px;top:536.10px;font-size:9.4px;color:#000;transform:scaleX(1.0821);">Online Application</span>
<span class="t" style="left:92.90px;top:552.66px;font-size:9.4px;color:#000;transform:scaleX(1.0825);">Transfer Credits</span>
<span class="t" style="left:92.90px;top:569.22px;font-size:9.4px;color:#000;transform:scaleX(1.0628);">Financial Aid</span>
<span class="t" style="left:92.90px;top:585.79px;font-size:9.4px;color:#000;transform:scaleX(1.0497);">Message Center</span>
<span class="t" style="left:92.90px;top:602.35px;font-size:9.4px;color:#000;transform:scaleX(1.0738);">My Documents</span>
<span class="t" style="left:92.90px;top:618.91px;font-size:9.4px;color:#000;transform:scaleX(1.0853);">External Links</span>
<span class="t" style="left:92.90px;top:635.47px;font-size:9.4px;color:#000;transform:scaleX(1.0581);">Campus Calendar</span>
<span class="t" style="left:92.90px;top:652.04px;font-size:9.4px;color:#000;transform:scaleX(1.0625);">My Menu Group</span>
<span class="t" style="left:92.90px;top:668.60px;font-size:9.4px;color:#000;transform:scaleX(1.0655);">Candidate Search</span>
<span class="t" style="left:92.90px;top:685.16px;font-size:9.4px;color:#000;transform:scaleX(1.0634);">My Housing</span>
<span class="t" style="left:92.90px;top:701.72px;font-size:9.4px;color:#000;transform:scaleX(1.0702);">Contact Manager</span>
<span class="t" style="left:92.90px;top:718.29px;font-size:9.4px;color:#000;transform:scaleX(1.0799);">My Personal Info</span>
<span class="t" style="left:92.90px;top:734.85px;font-size:9.4px;color:#000;transform:scaleX(1.0855);">Student Services</span>
<span class="t" style="left:77.20px;top:751.41px;font-size:9.4px;color:#000;transform:scaleX(1.0330);">News</span>
<span class="t" style="left:77.20px;top:767.97px;font-size:9.4px;color:#000;transform:scaleX(1.0380);">Hold Messages</span>
<span class="t" style="left:77.20px;top:784.54px;font-size:9.4px;color:#000;transform:scaleX(1.0546);">Knowledge Base</span>
</div>
<div id="dash"></div>
<div class="fs" style="left:307px;top:128px;width:733.5px;height:54.3px"></div>
<div id="inp"></div>
<div class="fs" style="left:307px;top:222px;width:733.5px;height:535.3px"></div>
<div id="ta"></div>
<pre id="code">&lt;title&gt;Renee - WebChat&lt;/title&gt;

    &lt;style&gt;

        html, body {
            height: 100%;
            width: 100%;
            margin: 0;
        }

        /* widget css starts here */
        .widget-bot {
            position: fixed;
            top: 50%;
            right: 0;
            transform: translateY(-50%);
        }

            .widget-bot text {
                display: block;
                text-align: center;
                padding: 8%;
                transition: all 0.3s ease;
                color: white;
                font-size: 20px;
                border-radius: 30px;
                background: #3B5998;
            }

                .widget-bot text:hover {
                    background-color: #000;
                }
        /* widget css ends here */


        /* iframe container */
        #frameContainer {
            bottom: 0;
            position: fixed;
            right: 0;</pre>
<div id="tatrk"></div><div id="tathb"></div><div id="tacor"><svg width="18" height="18" viewBox="0 0 18 18"><path d="M8.5 16.5L16.5 8.5M12.5 16.5L16.5 12.5" stroke="#6e6e6e" stroke-width="0.9" fill="none"/></svg></div>
<svg class="arr" style="left:1008.8px;top:238px" width="8.6" height="4.2" viewBox="0 0 8 4"><path d="M0 4L4 0L8 4Z" fill="#a3a3a3"/></svg>
<svg class="arr" style="left:1008.8px;top:720.8px" width="8.6" height="4.6" viewBox="0 0 8 4"><path d="M0 0L4 4L8 0Z" fill="#505050"/></svg>
<div id="btn"></div>
<span class="t" style="left:36.20px;top:19.19px;font-size:27px;color:#e4e4e4;font-family:'Liberation Serif';">anthology</span>
<span class="t" style="left:164.00px;top:19.76px;font-size:23.2px;color:#fff;font-weight:bold;letter-spacing:0.613px;">Portal Configuration</span>
<span class="t" style="left:958.60px;top:19.63px;font-size:15.2px;color:#fff;font-weight:bold;letter-spacing:-0.085px;">Sign Out</span>
<span class="t" style="left:306.70px;top:84.03px;font-size:20.7px;color:#cc3300;font-weight:bold;transform:scaleX(0.9588);">Menu Item Configuration</span>
<span class="t" style="left:308.00px;top:110.02px;font-size:13.5px;color:#333399;font-weight:bold;transform:scaleX(1.1866);">Menu Item Name</span>
<span class="t" style="left:315.00px;top:137.24px;font-size:9.4px;color:#333;font-weight:bold;transform:scaleX(1.1734);">Menu Item Name</span>
<span class="t" style="left:315.00px;top:154.74px;font-size:9.4px;color:#333;font-weight:bold;transform:scaleX(1.1313);">External Link Type:</span>
<span class="t" style="left:438.80px;top:154.74px;font-size:9.4px;color:#333;font-weight:bold;transform:scaleX(1.0995);">Custom HTML Page</span>
<span class="t" style="left:442.00px;top:136.94px;font-size:9.4px;color:#444;transform:scaleX(1.0974);">Digital Assistant</span>
<span class="t" style="left:308.00px;top:184.12px;font-size:13.5px;color:#333399;font-weight:bold;transform:scaleX(1.1349);">Add Custom content here</span>
<span class="t" style="left:306.30px;top:207.84px;font-size:9.4px;color:#333;transform:scaleX(1.1074);">You can add HTML content to be displayed on this page in the textbox below. Please note that the content should not have html, body or header tags.</span>
<span class="t" style="left:313.70px;top:230.24px;font-size:9.4px;color:#333;font-weight:bold;transform:scaleX(1.1103);">HTML Content:</span>
<span class="t" style="left:311.90px;top:760.64px;font-size:9.4px;color:#333399;transform:scaleX(1.1040);">Update Menu Item and External Link</span>
</body></html>
